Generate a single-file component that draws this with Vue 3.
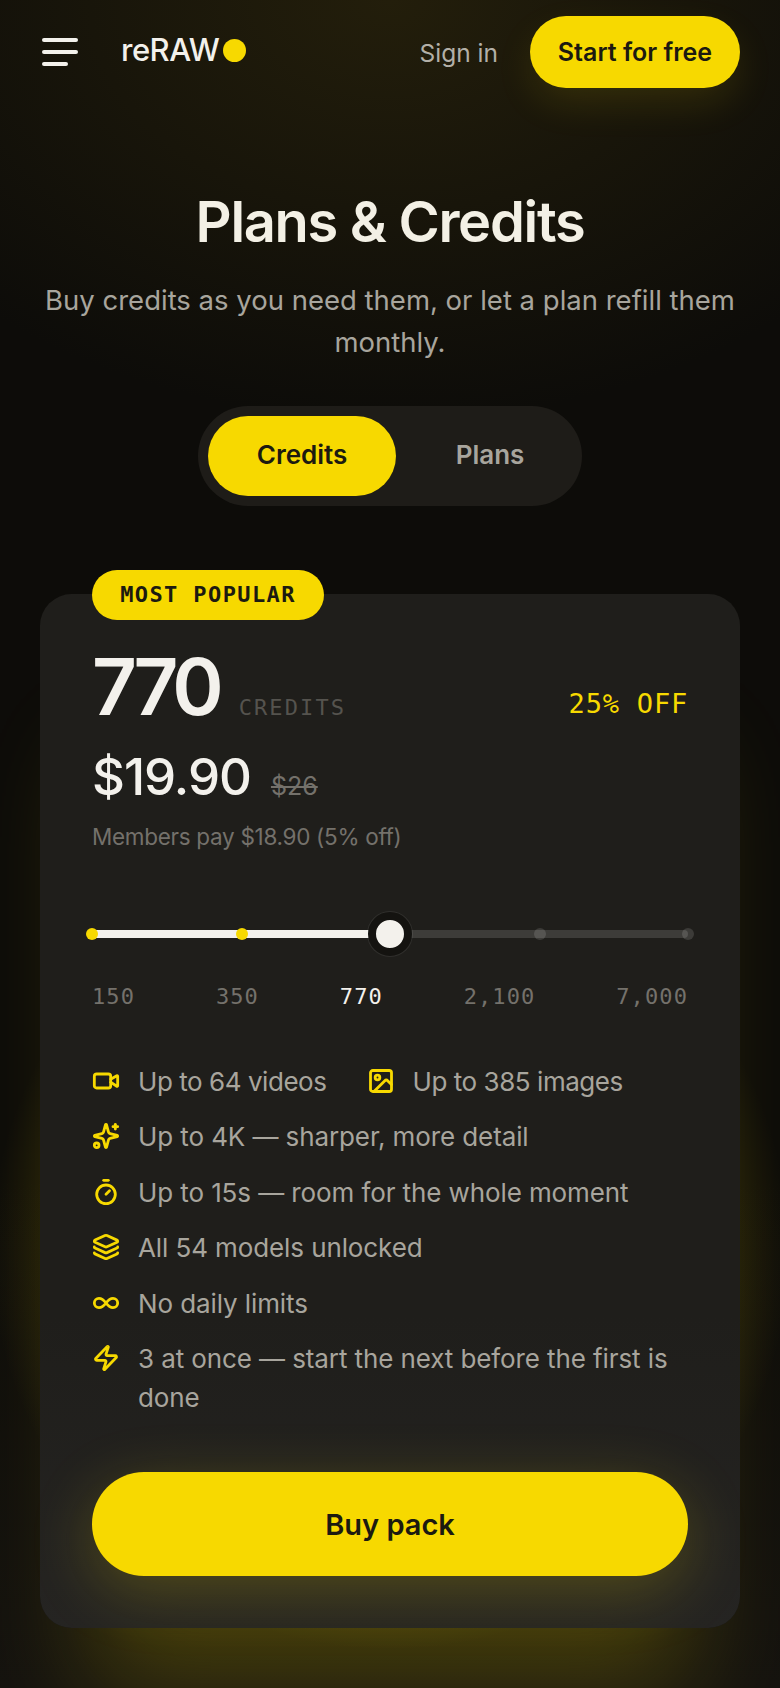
<template>
  <div class="page">
    <header class="topbar">
      <button class="menu" aria-label="Menu"><span></span><span></span><span class="short"></span></button>
      <div class="logo">reRAW<i class="logo-dot"></i></div>
      <a class="signin">Sign in</a>
      <button class="cta">Start for free</button>
    </header>

    <section class="hero">
      <h1>Plans &amp; Credits</h1>
      <p>Buy credits as you need them, or let a plan refill them monthly.</p>
      <div class="tabs">
        <button class="tab active">Credits</button>
        <button class="tab">Plans</button>
      </div>
    </section>

    <section class="card">
      <div class="badge">MOST POPULAR</div>
      <div class="amount-row">
        <div class="amount"><strong>770</strong><span>CREDITS</span></div>
        <div class="off">25% OFF</div>
      </div>
      <div class="price"><strong>$19.90</strong><s>$26</s></div>
      <div class="members">Members pay $18.90 (5% off)</div>

      <div class="slider">
        <div class="track"></div>
        <div class="fill"></div>
        <i
          v-for="s in stops"
          :key="s.label"
          class="stop"
          :class="{ on: s.pos < 50 }"
          :style="{ left: s.pos + '%' }"
        ></i>
        <div class="thumb"></div>
      </div>
      <div class="labels">
        <span v-for="s in stops" :key="s.label" :class="{ current: s.pos === 50 }">{{ s.label }}</span>
      </div>

      <ul class="features">
        <li class="double">
          <span class="feat">
            <svg viewBox="0 0 24 24"><path d="m16 13 5.223 3.482a.5.5 0 0 0 .777-.416V7.87a.5.5 0 0 0-.752-.432L16 10.5" /><rect x="2" y="6" width="14" height="12" rx="2" /></svg>
            Up to 64 videos
          </span>
          <span class="feat">
            <svg viewBox="0 0 24 24"><rect x="3" y="3" width="18" height="18" rx="2" /><circle cx="9" cy="9" r="2" /><path d="m21 15-3.086-3.086a2 2 0 0 0-2.828 0L6 21" /></svg>
            Up to 385 images
          </span>
        </li>
        <li>
          <svg viewBox="0 0 24 24"><path d="M9.937 15.5A2 2 0 0 0 8.5 14.063l-6.135-1.582a.5.5 0 0 1 0-.962L8.5 9.936A2 2 0 0 0 9.937 8.5l1.582-6.135a.5.5 0 0 1 .963 0L14.063 8.5A2 2 0 0 0 15.5 9.937l6.135 1.581a.5.5 0 0 1 0 .964L15.5 14.063a2 2 0 0 0-1.437 1.437l-1.582 6.135a.5.5 0 0 1-.963 0z" /><path d="M20 2v4" /><path d="M22 4h-4" /><circle cx="4" cy="20" r="2" /></svg>
          <span>Up to 4K — sharper, more detail</span>
        </li>
        <li>
          <svg viewBox="0 0 24 24"><line x1="10" x2="14" y1="2" y2="2" /><line x1="12" x2="15" y1="14" y2="11" /><circle cx="12" cy="14" r="8" /></svg>
          <span>Up to 15s — room for the whole moment</span>
        </li>
        <li>
          <svg viewBox="0 0 24 24"><path d="M12.83 2.18a2 2 0 0 0-1.66 0L2.6 6.08a1 1 0 0 0 0 1.83l8.58 3.91a2 2 0 0 0 1.66 0l8.58-3.9a1 1 0 0 0 0-1.83z" /><path d="M2 12a1 1 0 0 0 .58.91l8.6 3.91a2 2 0 0 0 1.65 0l8.58-3.9A1 1 0 0 0 22 12" /><path d="M2 17a1 1 0 0 0 .58.91l8.6 3.91a2 2 0 0 0 1.65 0l8.58-3.9A1 1 0 0 0 22 17" /></svg>
          <span>All 54 models unlocked</span>
        </li>
        <li>
          <svg viewBox="0 0 24 24"><path d="M12 12c-2-2.67-4-4-6-4a4 4 0 1 0 0 8c2 0 4-1.33 6-4Zm0 0c2 2.67 4 4 6 4a4 4 0 0 0 0-8c-2 0-4 1.33-6 4Z" /></svg>
          <span>No daily limits</span>
        </li>
        <li>
          <svg viewBox="0 0 24 24"><path d="M4 14a1 1 0 0 1-.78-1.63l9.9-10.2a.5.5 0 0 1 .86.46l-1.92 6.02A1 1 0 0 0 13 10h7a1 1 0 0 1 .78 1.63l-9.9 10.2a.5.5 0 0 1-.86-.46l1.92-6.02A1 1 0 0 0 11 14z" /></svg>
          <span>3 at once — start the next before the first is done</span>
        </li>
      </ul>

      <button class="buy">Buy pack</button>
    </section>
  </div>
</template>

<script setup>
const stops = [
  { label: '150', pos: 0 },
  { label: '350', pos: 25.2 },
  { label: '770', pos: 50 },
  { label: '2,100', pos: 75.2 },
  { label: '7,000', pos: 100 },
]
</script>

<style>
html, body {
  margin: 0;
  background: #0d0c09;
}
</style>

<style scoped>
.page {
  width: 780px;
  height: 1688px;
  overflow: hidden;
  box-sizing: border-box;
  padding: 16px 40px 0;
  background:
    radial-gradient(ellipse 600px 420px at 50% 0, #231e0b 0%, rgba(35, 30, 11, 0) 100%),
    radial-gradient(ellipse 400px 400px at 50% 1250px, rgba(247, 217, 0, 0.08) 85%, rgba(247, 217, 0, 0) 100%),
    linear-gradient(180deg, #0d0c09 70%, #15130f 100%);
  font-family: Inter, "Noto Sans", sans-serif;
  color: #f3f1ec;
}
button {
  border: none;
  font-family: inherit;
  padding: 0;
}

.topbar {
  display: flex;
  align-items: center;
  height: 72px;
}
.menu {
  width: 36px;
  height: 28px;
  margin: 0 0 0 2px;
  background: none;
  display: flex;
  flex-direction: column;
  justify-content: space-between;
}
.menu span {
  display: block;
  width: 36px;
  height: 4px;
  border-radius: 2px;
  background: #f3f1ec;
}
.menu span.short {
  width: 26px;
}
.logo {
  display: flex;
  align-items: flex-start;
  margin-left: 43px;
  font-size: 31px;
  font-weight: 500;
  letter-spacing: -0.5px;
  line-height: 40px;
  margin-top: -4px;
}
.logo-dot {
  width: 23px;
  height: 23px;
  margin: 9px 0 0 4px;
  border-radius: 50%;
  background: #f7d900;
}
.signin {
  margin: 1px 0 0 auto;
  font-size: 24.5px;
  color: #b3b0a8;
}
.cta {
  margin-left: 32px;
  width: 210px;
  height: 72px;
  border-radius: 36px;
  background: #f7d900;
  color: #1c1a10;
  font-size: 25px;
  font-weight: 600;
  box-shadow: 0 16px 40px -4px rgba(247, 217, 0, 0.13);
}

.hero {
  display: flex;
  flex-direction: column;
  align-items: center;
  text-align: center;
}
.hero h1 {
  margin: 100px 0 0;
  font-size: 56px;
  line-height: 68px;
  font-weight: 600;
  letter-spacing: -1.3px;
  color: #f3f0e5;
}
.hero p {
  margin: 23px 0 0;
  font-size: 27.5px;
  line-height: 42px;
  color: #a8a59d;
}
.tabs {
  display: flex;
  box-sizing: border-box;
  width: 384px;
  height: 100px;
  margin-top: 43px;
  padding: 10px;
  border-radius: 50px;
  background: #1e1c18;
}
.tab {
  height: 80px;
  border-radius: 40px;
  background: none;
  color: #a8a59d;
  font-size: 26px;
  font-weight: 600;
  flex: 1;
  padding: 0 0 3px 12px;
}
.tab.active {
  flex: 0 0 188px;
  padding-left: 0;
  background: #f7d900;
  color: #1c1a10;
}

.card {
  position: relative;
  box-sizing: border-box;
  height: 1034px;
  margin-top: 88px;
  padding: 49px 52px 0;
  border-radius: 32px;
  background: linear-gradient(180deg, #1f1e1b 0%, #1f1e1b 70%, #252422 100%);
  box-shadow: 0 110px 100px -50px rgba(247, 217, 0, 0.22);
}
.badge {
  position: absolute;
  left: 52px;
  top: -24px;
  width: 232px;
  height: 50px;
  border-radius: 25px;
  background: #f7d900;
  color: #1c1a10;
  font-family: "DejaVu Sans Mono", monospace;
  font-size: 22px;
  font-weight: 700;
  letter-spacing: 1.4px;
  line-height: 50px;
  text-align: center;
}
.amount-row {
  display: flex;
  align-items: flex-end;
  justify-content: space-between;
}
.amount {
  display: flex;
  align-items: baseline;
  gap: 20px;
}
.amount strong {
  font-size: 78px;
  line-height: 88px;
  font-weight: 600;
  letter-spacing: -5px;
  color: #f3f1ec;
}
.amount span {
  font-family: "DejaVu Sans Mono", monospace;
  font-size: 22px;
  letter-spacing: 2.1px;
  color: #55534e;
}
.off {
  margin-bottom: 12px;
  font-family: "DejaVu Sans Mono", monospace;
  font-size: 27px;
  letter-spacing: 0.8px;
  color: #f7d900;
}
.price {
  display: flex;
  align-items: baseline;
  gap: 20px;
  margin-top: 12px;
}
.price strong {
  font-size: 51px;
  line-height: 68px;
  font-weight: 500;
  letter-spacing: -1px;
}
.price s {
  font-size: 25px;
  color: #74716b;
}
.members {
  margin-top: 9px;
  font-size: 22.5px;
  letter-spacing: -0.3px;
  line-height: 34px;
  color: #74716b;
}

.slider {
  position: relative;
  height: 44px;
  margin-top: 58px;
}
.track,
.fill {
  position: absolute;
  top: 18px;
  left: 0;
  height: 8px;
  border-radius: 4px;
}
.track {
  width: 100%;
  background: #3d3c39;
}
.fill {
  width: 50%;
  background: #f3f1ec;
}
.stop {
  position: absolute;
  top: 16px;
  width: 12px;
  height: 12px;
  margin-left: -6px;
  border-radius: 50%;
  background: rgba(255, 255, 255, 0.13);
}
.stop.on {
  background: #f7d900;
}
.thumb {
  position: absolute;
  left: 50%;
  top: 0;
  box-sizing: border-box;
  width: 44px;
  height: 44px;
  margin-left: -22px;
  border: 8px solid #141310;
  border-radius: 50%;
  background: #f3f1ec;
  box-shadow: 0 0 0 1px rgba(255, 255, 255, 0.08);
}
.labels {
  display: flex;
  justify-content: space-between;
  margin-top: 26px;
  font-family: "DejaVu Sans Mono", monospace;
  font-size: 22px;
  line-height: 30px;
  letter-spacing: 1.1px;
  color: #74716b;
}
.labels .current {
  color: #f3f1ec;
}

.features {
  list-style: none;
  margin: 49.5px 0 0;
  padding: 0;
  display: flex;
  flex-direction: column;
  gap: 16.5px;
  font-size: 26px;
  letter-spacing: -0.1px;
  line-height: 39px;
  color: #a8a59d;
}
.features li,
.feat {
  display: flex;
  align-items: flex-start;
  gap: 18px;
}
.features li.double {
  gap: 40px;
  letter-spacing: -0.45px;
}
svg {
  flex: none;
  width: 28px;
  height: 28px;
  margin-top: 5px;
  fill: none;
  stroke: #f7d900;
  stroke-width: 2.4;
  stroke-linecap: round;
  stroke-linejoin: round;
}

.buy {
  position: absolute;
  left: 52px;
  right: 52px;
  bottom: 52px;
  height: 104px;
  border-radius: 52px;
  background: #f7d900;
  color: #1c1a10;
  font-size: 29px;
  font-weight: 600;
  box-shadow: 0 16px 64px rgba(247, 217, 0, 0.22);
}
</style>
